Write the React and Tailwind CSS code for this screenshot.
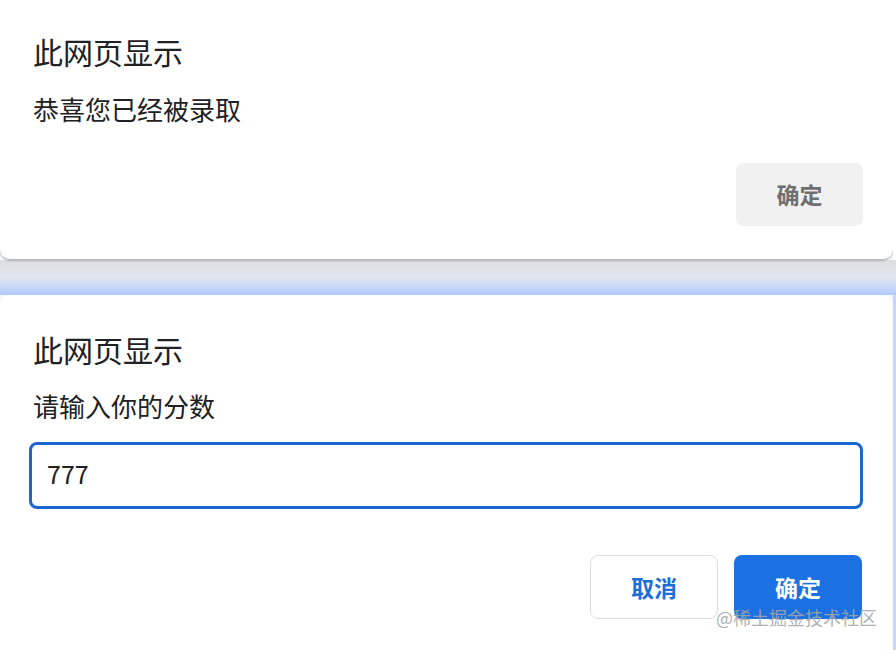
import React from "react";

const font = { fontFamily: '"Noto Sans CJK SC", "Noto Sans", sans-serif' };

function AlertDialog() {
	return (
		<div className="h-[260px] w-[893px] rounded-b-[10px] bg-white border-b border-[#b9b9bb] shadow-[0_1px_2px_rgba(0,0,0,0.2)] flex flex-col pl-[33px] pr-[30px]">
			<div className="pt-[34px] text-[30px] leading-[34px] text-[#202124]">此网页显示</div>
			<div className="mt-[24px] text-[26px] leading-[34px] text-[#202124]">恭喜您已经被录取</div>
			<div className="mt-auto mb-[33px] flex justify-end">
				<button className="h-[63px] w-[127px] rounded-[8px] bg-[#f1f1f1] text-[23px] font-bold text-[#6f6f6f]">
					确定
				</button>
			</div>
		</div>
	);
}

function PromptDialog() {
	return (
		<div className="relative h-[355px] w-[893px] rounded-t-[10px] bg-white flex flex-col px-[29px]">
			<div className="pt-[37px] pl-[4px] text-[30px] leading-[34px] text-[#202124]">此网页显示</div>
			<div className="mt-[23px] pl-[4px] text-[26px] leading-[34px] text-[#202124]">请输入你的分数</div>
			<div className="mt-[19px] h-[67px] w-[834px] rounded-[8px] border-[3px] border-[#1b66d0] flex items-center px-[15px] pb-[4px]">
				<span className="text-[25px] text-[#202124]">777</span>
			</div>
			<div className="mt-[46px] flex justify-end gap-[16px] pr-[2px]">
				<button className="h-[64px] w-[128px] rounded-[8px] border border-[#dadce0] bg-white text-[23px] font-bold text-[#1a6fdb]">
					取消
				</button>
				<button className="h-[64px] w-[128px] rounded-[8px] bg-[#1b71e2] text-[23px] font-bold text-white">
					确定
				</button>
			</div>
			<div className="absolute left-[716px] top-[310px] whitespace-nowrap text-[18px] leading-[24px] text-[#a4a6aa]/90">
				@稀土掘金技术社区
			</div>
		</div>
	);
}

export default function App() {
	return (
		<div className="h-[650px] w-[896px] overflow-hidden bg-[#f4f6fb]" style={font}>
			<div className="flex">
				<AlertDialog />
				<div className="w-[3px] bg-white" />
			</div>
			<div className="h-[35px] w-full bg-gradient-to-b from-[#dcdde1] via-[#e3e6ec] to-[#aecbff]" />
			<div className="flex">
				<PromptDialog />
				<div className="w-[3px] bg-[#c3d6fb]" />
			</div>
		</div>
	);
}
